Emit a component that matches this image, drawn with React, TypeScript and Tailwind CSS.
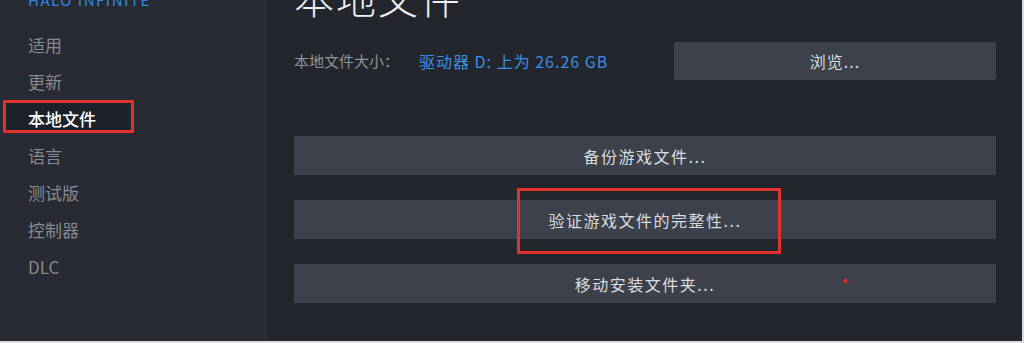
const navItems = ['适用', '更新', '本地文件', '语言', '测试版', '控制器', 'DLC'];

function NavItem({ label, active }: { label: string; active?: boolean }) {
  return (
    <div
      className={`relative h-[37px] flex items-center pl-[28px] text-[17px] ${
        active ? 'text-white font-medium' : 'text-[#868a91]'
      }`}
    >
      {active && (
        <div className="absolute left-[3px] top-[0px] w-[131px] h-[33px] border-[3px] border-[#e3312c] bg-[#1d212a]" />
      )}
      <span className="relative">{label}</span>
    </div>
  );
}

function ActionButton({ label, children }: { label: string; children?: React.ReactNode }) {
  return (
    <div className="relative h-[39px] bg-[#3c414b] flex items-center justify-center text-[16px] tracking-[1.5px] text-[#d9dbde]">
      {label}
      {children}
    </div>
  );
}

export default function App() {
  return (
    <div
      className="w-[1024px] h-[343px] flex overflow-hidden bg-[#23262d] border-b-2 border-r-2 border-[#d9dbde]"
      style={{ fontFamily: '"Noto Sans CJK SC", "Noto Sans", sans-serif' }}
    >
      {/* Sidebar */}
      <div className="w-[266px] shrink-0 bg-[#282b33] border-r border-[#30343c] flex flex-col">
        <div className="-mt-[8px] h-[16px] pl-[28px] text-[15px] leading-none tracking-[1.5px] text-[#2e8ae6]">
          HALO INFINITE
        </div>
        <div className="mt-[18px] flex flex-col">
          {navItems.map((item) => (
            <NavItem key={item} label={item} active={item === '本地文件'} />
          ))}
        </div>
      </div>

      {/* Main */}
      <div className="flex-1 flex flex-col pl-[28px] pr-[26px]">
        <h1 className="-mt-[23px] text-[40px] leading-none font-light text-[#eef0f2] tracking-[2px]">
          本地文件
        </h1>

        <div className="mt-[25px] flex items-center">
          <div className="flex items-center gap-[20px]">
            <span className="text-[15px] text-[#8f949b]">本地文件大小：</span>
            <span className="text-[16px] tracking-[1px] text-[#3b8fe6]">驱动器 D: 上为 26.26 GB</span>
          </div>
          <div className="ml-auto w-[322px] h-[38px] bg-[#3c414b] rounded-[2px] flex items-center justify-center text-[16px] tracking-[1px] text-[#d9dbde]">
            浏览...
          </div>
        </div>

        <div className="mt-[56px] flex flex-col gap-[25px]">
          <ActionButton label="备份游戏文件..." />
          <ActionButton label="验证游戏文件的完整性...">
            <div className="absolute left-[223px] -top-[12px] w-[264px] h-[66px] border-[3px] border-[#e3312c]" />
          </ActionButton>
          <ActionButton label="移动安装文件夹...">
            <div className="absolute left-[550px] top-[15px] w-[3px] h-[4px] bg-[#e3312c]" />
          </ActionButton>
        </div>
      </div>
    </div>
  );
}
